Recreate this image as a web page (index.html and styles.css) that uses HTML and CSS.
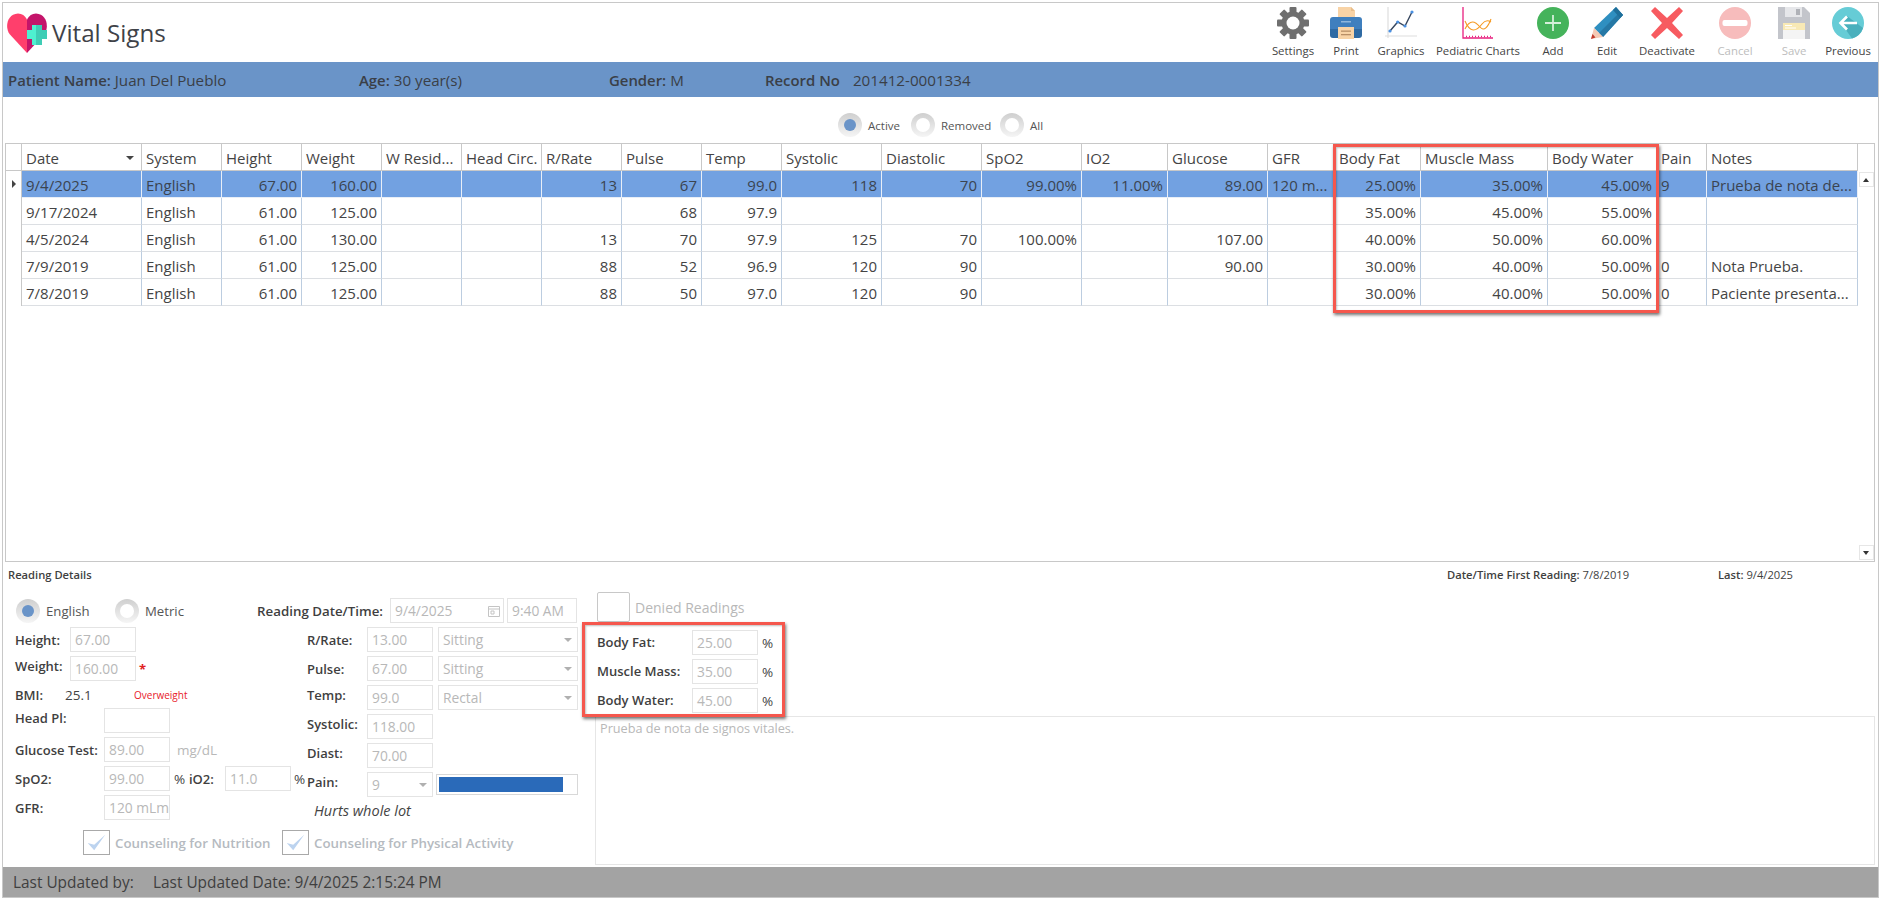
FILE: index.html
```html
<!DOCTYPE html>
<html lang="en">
<head>
<meta charset="utf-8">
<title>Vital Signs</title>
<link rel="stylesheet" href="styles.css">
</head>
<body>
<div class="app">
  <header class="topbar">
    <svg class="logo" viewBox="0 0 40 40" aria-hidden="true">
      <path fill="#ff3f6c" d="M20 40 L2.5 21 C-2 15 -0.5 1 11 0.5 C15 0.5 18 2.5 20 6.5Z"/>
      <path fill="#c4146a" d="M20 40 L37.5 21 C42 15 40.5 1 29 0.5 C25 0.5 22 2.5 20 6.5Z"/>
      <path fill="#4ef0d0" d="M25 12h4v5h0v9h0v6h-4v-6h-5v-9h5z"/>
      <path fill="#3fcdb5" d="M29 12h6v5h5v9h-5v6h-6z"/>
    </svg>
    <h1 class="title">Vital Signs</h1>
    <nav class="toolbar">
      <div class="tool"><svg class="icon" viewBox="0 0 32 32"><g fill="#6f6f6f"><rect x="12.5" y="0" width="7" height="32" rx="1"/><rect x="12.5" y="0" width="7" height="32" rx="1" transform="rotate(45 16 16)"/><rect x="12.5" y="0" width="7" height="32" rx="1" transform="rotate(90 16 16)"/><rect x="12.5" y="0" width="7" height="32" rx="1" transform="rotate(135 16 16)"/><circle cx="16" cy="16" r="11.5"/></g><circle cx="16" cy="16" r="6.5" fill="#fff"/></svg><span>Settings</span></div>
      <div class="tool"><svg class="icon" viewBox="0 0 32 32"><path fill="#f8d3a6" d="M8 0h13l4 4v8H8z"/><path fill="#e8bd8a" d="M21 0l4 4h-4z"/><path fill="#3f7fbe" d="M3 10h26a3 3 0 0 1 3 3v9H0v-9a3 3 0 0 1 3-3z"/><path fill="#2f6aa3" d="M0 22h32v6a3 3 0 0 1-3 3H3a3 3 0 0 1-3-3z"/><rect x="11" y="14" width="10" height="1.5" fill="#8fb7dd"/><rect x="8" y="20" width="16" height="12" fill="#f8d3a6"/><rect x="11" y="23.5" width="10" height="1.3" fill="#b98f66"/><rect x="11" y="27" width="10" height="1.3" fill="#b98f66"/></svg><span>Print</span></div>
      <div class="tool"><svg class="icon" viewBox="0 0 32 32"><path d="M3 0v31M0 29h32" stroke="#dedede" stroke-width="1.2" fill="none"/><polyline points="5,24 12.7,15 20,19 27,5" fill="none" stroke="#37475f" stroke-width="1.4"/><g fill="#4a90e2"><circle cx="5" cy="24" r="1.6"/><circle cx="12.7" cy="15" r="1.6"/><circle cx="20" cy="19" r="1.6"/><circle cx="27" cy="5" r="1.6"/></g></svg><span>Graphics</span></div>
      <div class="tool"><svg class="icon" viewBox="0 0 32 32"><path d="M1 0v31h30" stroke="#e8207f" stroke-width="1.3" fill="none"/><path d="M4 29.5h26" stroke="#e8207f" stroke-width="1.6" stroke-dasharray="1 2" fill="none"/><path d="M3 14 C8 26 14 25 20 17 C23 13 26 13 29 15" stroke="#f59a23" stroke-width="1.1" fill="none"/><path d="M3 22 C8 12 13 14 18 20 C22 25 26 20 29 12" stroke="#f59a23" stroke-width="1.1" fill="none"/></svg><span>Pediatric Charts</span></div>
      <div class="tool"><svg class="icon" viewBox="0 0 32 32"><circle cx="16" cy="16" r="16" fill="#45b35b"/><path d="M16 8v16M8 16h16" stroke="#d5efda" stroke-width="1.8"/></svg><span>Add</span></div>
      <div class="tool"><svg class="icon" viewBox="0 0 32 32"><path fill="#2f8fc0" d="M3 21 L25 0 L32 8 L12 30z"/><path fill="#2678a5" d="M8 26 L29 5 L32 8 L12 30z"/><path fill="#1f6f9a" d="M22 3 L25 0 L32 8 L29 11z"/><path fill="#f4c9b4" d="M3 21 L12 30 L0 32z"/><path fill="#c0392b" d="M1.5 27 L4.5 30.6 L0 32z"/></svg><span>Edit</span></div>
      <div class="tool"><svg class="icon" viewBox="0 0 32 32"><path fill="#f75b60" d="M4 0 L16 11 L28 0 L32 4 L21 16 L32 28 L28 32 L16 21 L4 32 L0 28 L11 16 L0 4z"/></svg><span>Deactivate</span></div>
      <div class="tool tool-off"><svg class="icon" viewBox="0 0 32 32"><circle cx="16" cy="16" r="16" fill="#f7bcbc"/><rect x="3.5" y="13" width="25" height="6" rx="2" fill="#fff"/></svg><span>Cancel</span></div>
      <div class="tool tool-off"><svg class="icon" viewBox="0 0 32 32"><path fill="#c3c5cb" d="M0 0h26l6 6v26H0z"/><rect x="7" y="0" width="17" height="10" fill="#e6e7ea"/><rect x="18" y="2" width="4" height="6" fill="#b0b2b8"/><rect x="5" y="16" width="22" height="16" fill="#f4f4f4"/><rect x="5" y="16" width="22" height="7" fill="#f8e9b5"/><rect x="7" y="18" width="7" height="1" fill="#fff"/><rect x="7" y="20.5" width="11" height="1" fill="#fff"/></svg><span>Save</span></div>
      <div class="tool"><svg class="icon" viewBox="0 0 32 32"><circle cx="16" cy="16" r="16" fill="#66ccd6"/><path fill="#4ab0bd" d="M9 16 L15 9 L31 21 A16 16 0 0 1 20 31.5z"/><path d="M25 16H9M15 9.5 L8.5 16 L15 22.5" fill="none" stroke="#fff" stroke-width="2.6"/></svg><span>Previous</span></div>
    </nav>
  </header>

  <section class="patient">
    <span class="pt-item pt-name"><b>Patient Name:</b> Juan Del Pueblo</span>
    <span class="pt-item pt-age"><b>Age:</b> 30 year(s)</span>
    <span class="pt-item pt-gender"><b>Gender:</b> M</span>
    <span class="pt-item"><b class="pt-rec">Record No</b>201412-0001334</span>
  </section>

  <div class="filters">
    <label class="opt opt-small opt-active"><i class="radio on"></i>Active</label>
    <label class="opt opt-small opt-removed"><i class="radio"></i>Removed</label>
    <label class="opt opt-small"><i class="radio"></i>All</label>
  </div>

  <section class="grid">
    <table class="vitals">
      <colgroup><col class="c0"><col class="c-date"><col class="c80"><col class="c80"><col class="c80"><col class="c80"><col class="c80"><col class="c80"><col class="c80"><col class="c80"><col class="c100"><col class="c100"><col class="c100"><col class="c-io2"><col class="c100"><col class="c-gfr"><col class="c-fat"><col class="c-muscle"><col class="c-water"><col class="c-pain"><col class="c-notes"></colgroup>
      <thead>
        <tr><th></th><th class="sorted">Date</th><th>System</th><th>Height</th><th>Weight</th><th>W Resid...</th><th>Head Circ.</th><th>R/Rate</th><th>Pulse</th><th>Temp</th><th>Systolic</th><th>Diastolic</th><th>SpO2</th><th>IO2</th><th>Glucose</th><th>GFR</th><th>Body Fat</th><th>Muscle Mass</th><th>Body Water</th><th>Pain</th><th>Notes</th></tr>
      </thead>
      <tbody>
        <tr class="selected"><td class="ind"><i class="marker"></i></td><td>9/4/2025</td><td>English</td><td class="n">67.00</td><td class="n">160.00</td><td></td><td></td><td class="n">13</td><td class="n">67</td><td class="n">99.0</td><td class="n">118</td><td class="n">70</td><td class="n">99.00%</td><td class="n">11.00%</td><td class="n">89.00</td><td>120 m...</td><td class="n">25.00%</td><td class="n">35.00%</td><td class="n">45.00%</td><td>9</td><td>Prueba de nota de...</td></tr>
        <tr><td class="ind"></td><td>9/17/2024</td><td>English</td><td class="n">61.00</td><td class="n">125.00</td><td></td><td></td><td></td><td class="n">68</td><td class="n">97.9</td><td></td><td></td><td></td><td></td><td></td><td></td><td class="n">35.00%</td><td class="n">45.00%</td><td class="n">55.00%</td><td></td><td></td></tr>
        <tr><td class="ind"></td><td>4/5/2024</td><td>English</td><td class="n">61.00</td><td class="n">130.00</td><td></td><td></td><td class="n">13</td><td class="n">70</td><td class="n">97.9</td><td class="n">125</td><td class="n">70</td><td class="n">100.00%</td><td></td><td class="n">107.00</td><td></td><td class="n">40.00%</td><td class="n">50.00%</td><td class="n">60.00%</td><td></td><td></td></tr>
        <tr><td class="ind"></td><td>7/9/2019</td><td>English</td><td class="n">61.00</td><td class="n">125.00</td><td></td><td></td><td class="n">88</td><td class="n">52</td><td class="n">96.9</td><td class="n">120</td><td class="n">90</td><td></td><td></td><td class="n">90.00</td><td></td><td class="n">30.00%</td><td class="n">40.00%</td><td class="n">50.00%</td><td>0</td><td>Nota Prueba.</td></tr>
        <tr><td class="ind"></td><td>7/8/2019</td><td>English</td><td class="n">61.00</td><td class="n">125.00</td><td></td><td></td><td class="n">88</td><td class="n">50</td><td class="n">97.0</td><td class="n">120</td><td class="n">90</td><td></td><td></td><td></td><td></td><td class="n">30.00%</td><td class="n">40.00%</td><td class="n">50.00%</td><td>0</td><td>Paciente presenta...</td></tr>
      </tbody>
    </table>
    <div class="scroll">
      <span class="scroll-btn"><i class="tri-up"></i></span>
      <span class="scroll-btn"><i class="tri-down"></i></span>
    </div>
  </section>

  <section class="details">
    <div class="details-head">
      <span class="dh-title">Reading Details</span>
      <span class="dh-first"><b>Date/Time First Reading:</b> 7/8/2019</span>
      <span class="dh-last"><b>Last:</b> 9/4/2025</span>
    </div>
    <div class="details-body">
      <div class="form-left">
        <div class="top-row">
          <label class="opt opt-english"><i class="radio on"></i>English</label>
          <label class="opt"><i class="radio"></i>Metric</label>
          <span class="lbl lbl-date">Reading Date/Time:</span>
          <div class="field f-date">9/4/2025<svg class="cal" viewBox="0 0 12 12"><path d="M.5 1.5h11v10H.5zM.5 4h11M3 6h3v3H3z" fill="none" stroke="#c4c4c4"/></svg></div>
          <div class="field f-time">9:40 AM</div>
        </div>
        <div class="cols">
          <div class="col-left">
            <div class="row"><span class="lbl w55">Height:</span><div class="field">67.00</div></div>
            <div class="row"><span class="lbl w55 lift">Weight:</span><div class="field">160.00</div><span class="star">*</span></div>
            <div class="row row-bmi"><span class="lbl w50">BMI:</span><span class="bmi-val">25.1</span><span class="bmi-tag">Overweight</span></div>
            <div class="row"><span class="lbl w89 lift">Head Pl:</span><div class="field"></div></div>
            <div class="row"><span class="lbl w89">Glucose Test:</span><div class="field">89.00</div><span class="unit">mg/dL</span></div>
            <div class="row"><span class="lbl w89">SpO2:</span><div class="field">99.00</div><span class="pct pct-a">%</span><span class="lbl w36">iO2:</span><div class="field">11.0</div><span class="pct pct-b">%</span></div>
            <div class="row"><span class="lbl w89">GFR:</span><div class="field">120 mLm</div></div>
          </div>
          <div class="col-right">
            <div class="row"><span class="lbl w60">R/Rate:</span><div class="field">13.00</div><div class="field select">Sitting</div></div>
            <div class="row"><span class="lbl w60">Pulse:</span><div class="field">67.00</div><div class="field select">Sitting</div></div>
            <div class="row"><span class="lbl w60 lift">Temp:</span><div class="field">99.0</div><div class="field select">Rectal</div></div>
            <div class="row"><span class="lbl w60 lift">Systolic:</span><div class="field">118.00</div></div>
            <div class="row"><span class="lbl w60 lift">Diast:</span><div class="field">70.00</div></div>
            <div class="row"><span class="lbl w60 lift">Pain:</span><div class="field select-small">9</div><div class="painbar"><div class="painfill"></div></div></div>
            <div class="hurts">Hurts whole lot</div>
          </div>
        </div>
        <div class="checks">
          <div class="check check-first"><i class="box"><svg viewBox="0 0 27 25"><path d="M4 13 L11 21 L23 4 L11 15z" fill="#bcd3ef"/></svg></i>Counseling for Nutrition</div>
          <div class="check"><i class="box"><svg viewBox="0 0 27 25"><path d="M4 13 L11 21 L23 4 L11 15z" fill="#bcd3ef"/></svg></i>Counseling for Physical Activity</div>
        </div>
      </div>
      <div class="form-right">
        <div class="denied"><i class="box box-big"></i>Denied Readings</div>
        <div class="row body-row"><span class="lbl w95 lift-sm">Body Fat:</span><div class="field">25.00</div><span class="pct-c">%</span></div>
        <div class="row body-row"><span class="lbl w95 lift-sm">Muscle Mass:</span><div class="field">35.00</div><span class="pct-c">%</span></div>
        <div class="row body-row"><span class="lbl w95 lift-sm">Body Water:</span><div class="field">45.00</div><span class="pct-c">%</span></div>
        <div class="notes">Prueba de nota de signos vitales.</div>
      </div>
    </div>
  </section>

  <footer class="status">
    <span class="st-by">Last Updated by:</span>
    <span>Last Updated Date: 9/4/2025 2:15:24 PM</span>
  </footer>

  <div class="callout callout-grid"></div>
  <div class="callout callout-form"></div>
</div>
</body>
</html>
```
FILE: styles.css
```css
* { box-sizing: border-box; }
html, body { margin: 0; padding: 0; background: #fff; }
body { font-family: "Open Sans", "Noto Sans", sans-serif; color: #444; overflow: hidden; }

.app {
  position: relative;
  margin: 2px 0 0 2px;
  width: 1877px;
  height: 896px;
  border: 1px solid #c8c8c8;
  display: flex;
  flex-direction: column;
}

/* header */
.topbar { height: 59px; flex: none; display: flex; align-items: center; padding-left: 4px; }
.logo { width: 40px; height: 40px; flex: none; }
.title { margin: 2px 0 0 5px; font-size: 24.2px; font-weight: 500; color: #3f4248; line-height: 1; }
.toolbar {
  margin-left: auto;
  align-self: flex-start;
  display: grid;
  grid-template-columns: 54px 52px 58px 96px 54px 54px 66px 70px 48px 60px;
  padding-top: 4px;
}
.tool { display: flex; flex-direction: column; align-items: center; font-size: 11.4px; line-height: 16px; color: #444; white-space: nowrap; }
.tool span { margin-top: 4px; }
.tool-off span { color: #bdbdbd; }
.icon { width: 32px; height: 32px; display: block; }

/* patient strip */
.patient { height: 35px; flex: none; background: #6a94c8; display: flex; align-items: center; padding-left: 5px; font-size: 15.2px; color: #3a3f47; white-space: nowrap; }
.patient b { font-weight: 600; font-size: 14.9px; }
.pt-name { width: 351px; }
.pt-age { width: 250px; }
.pt-gender { width: 156px; }
.pt-rec { margin-right: 13px; }

/* filter radios */
.filters { height: 46px; flex: none; display: flex; align-items: flex-start; padding: 16px 0 0 835px; }
.opt { display: flex; align-items: center; height: 24px; font-size: 13.2px; color: #555; white-space: nowrap; }
.opt-small { font-size: 11.5px; }
.opt-active { width: 73px; }
.opt-removed { width: 89px; }
.opt-english { width: 99px; margin-left: 1px; }
.radio { position: relative; width: 24px; height: 24px; border-radius: 50%; flex: none; margin-right: 6px; background: linear-gradient(#cfcfcf, #f5f5f5); }
.radio::after { content: ""; position: absolute; left: 5px; top: 5px; width: 14px; height: 14px; border-radius: 50%; background: #fff; }
.radio.on::after { left: 6px; top: 6px; width: 12px; height: 12px; background: #6a94c8; }

/* data grid */
.grid { height: 419px; flex: none; margin: 0 3px 0 2px; border: 1px solid #c8c8c8; display: flex; align-items: stretch; }
.vitals { width: 1852px; flex: none; align-self: flex-start; table-layout: fixed; border-collapse: separate; border-spacing: 0; font-size: 15px; color: #444; }
.c0 { width: 16px; }
.c-date { width: 120px; }
.c80 { width: 80px; }
.c100 { width: 100px; }
.c-io2 { width: 86px; }
.c-gfr { width: 67px; }
.c-fat { width: 86px; }
.c-muscle { width: 127px; }
.c-water { width: 109px; }
.c-pain { width: 50px; }
.c-notes { width: 151px; }
.vitals th { height: 27px; padding: 1px 4px 0; font-weight: 400; text-align: left; white-space: nowrap; overflow: hidden; border-right: 1px solid #c8c8c8; border-bottom: 1px solid #c8c8c8; background: #fff; }
.vitals td { height: 27px; padding: 1px 4px 0; white-space: nowrap; overflow: hidden; border-right: 1px solid #bccde0; border-bottom: 1px solid #dcdfe3; }
.vitals td.n { text-align: right; }
.vitals th.sorted { position: relative; }
.vitals th.sorted::after { content: ""; position: absolute; right: 7px; top: 12px; border: 4px solid transparent; border-top: 4px solid #444; border-bottom: 0; }
.vitals td.ind { padding: 0; border-bottom: 0; border-right: 1px solid #c8c8c8; position: relative; }
.marker { position: absolute; left: 6px; top: 9px; border: 4px solid transparent; border-left: 4px solid #444; border-right: 0; }
.selected td { background: #72a1e1; color: #3b4450; border-right-color: #e8eef7; border-bottom-color: #e8eef7; }
.selected td.ind { background: #fff; border-right-color: #c8c8c8; }

.scroll { flex: 1; display: flex; flex-direction: column; justify-content: space-between; align-items: center; padding: 28px 0 1px; }
.scroll-btn { width: 15px; height: 15px; border: 1px solid #e6e6e6; display: flex; align-items: center; justify-content: center; background: #fff; }
.tri-up { border: 3.5px solid transparent; border-bottom: 4px solid #333; border-top: 0; }
.tri-down { border: 3.5px solid transparent; border-top: 4px solid #333; border-bottom: 0; }

/* details */
.details { flex: 1; min-height: 0; display: flex; flex-direction: column; }
.details-head { height: 28px; flex: none; display: flex; align-items: center; padding: 0 0 3px 5px; font-size: 11.2px; color: #3f3f3f; }
.dh-title { font-weight: 600; margin-right: auto; }
.dh-first { width: 271px; }
.dh-last { width: 160px; }
.dh-first b, .dh-last b { font-weight: 600; }
.details-body { flex: 1; display: flex; min-height: 0; }
.form-left { width: 592px; flex: none; padding: 8px 18px 0 12px; }
.form-right { flex: 1; margin-right: 3px; padding-top: 2px; display: flex; flex-direction: column; }

.top-row { display: flex; align-items: center; height: 25px; }
.lbl { font-size: 13px; font-weight: 600; color: #3f3f3f; white-space: nowrap; flex: none; }
.lift { margin-bottom: 5px; }
.lift-sm { margin-bottom: 2px; }
.lbl-date { margin-left: auto; margin-right: 7px; font-size: 13.3px; }
.field { width: 66px; height: 25px; flex: none; border: 1px solid #e4e4e4; padding: 0 4px; font-size: 13.8px; line-height: 23px; color: #b8b8b8; white-space: nowrap; overflow: hidden; position: relative; background: #fff; }
.f-date { width: 114px; }
.f-time { width: 70px; margin-left: 3px; }
.cal { position: absolute; right: 3px; top: 6px; width: 12px; height: 12px; }
.cols { display: flex; margin-top: 4px; }
.col-left { width: 292px; flex: none; display: flex; flex-direction: column; gap: 4px; }
.col-right { flex: 1; display: flex; flex-direction: column; gap: 4px; }
.row { display: flex; align-items: center; height: 25px; flex: none; }
.row-bmi { height: 19px; }
.w36 { width: 36px; }
.w50 { width: 50px; }
.w55 { width: 55px; }
.w60 { width: 60px; }
.w89 { width: 89px; }
.w95 { width: 95px; }
.star { margin-left: 3px; color: #e02020; font-size: 13px; font-weight: 700; }
.bmi-val { width: 69px; font-size: 13.5px; color: #444; }
.bmi-tag { font-size: 10px; color: #e8202a; }
.unit { margin-left: 7px; font-size: 13.5px; color: #b8b8b8; }
.pct { font-size: 13.5px; color: #444; }
.pct-a { width: 15px; margin-left: 4px; }
.pct-b { margin-left: 3px; }
.select { width: 140px; margin-left: 5px; }
.select::after, .select-small::after { content: ""; position: absolute; right: 5px; top: 10px; border: 4px solid transparent; border-top: 4px solid #b0b0b0; border-bottom: 0; }
.select-small { width: 66px; height: 25px; flex: none; border: 1px solid #e4e4e4; padding: 0 4px; font-size: 13.8px; line-height: 23px; color: #b8b8b8; position: relative; }
.painbar { width: 142px; height: 21px; margin-left: 3px; border: 1px solid #d8d8d8; padding: 2px; background: #fff; }
.painfill { width: 124px; height: 100%; background: #2a6ab9; }
.hurts { margin: -1px 0 0 7px; font-size: 14.5px; font-style: italic; color: #444; height: 22px; line-height: 22px; }
.checks { display: flex; margin-top: 8px; padding-left: 68px; }
.check { display: flex; align-items: center; font-size: 13.3px; font-weight: 600; color: #b5bac0; white-space: nowrap; }
.check-first { width: 199px; }
.box { display: block; width: 27px; height: 25px; border: 1px solid #a9a9a9; margin-right: 5px; flex: none; background: #fff; }
.box svg { display: block; width: 100%; height: 100%; }
.box-big { width: 33px; height: 30px; border-color: #c8c8c8; border-radius: 2px; }
.denied { display: flex; align-items: center; height: 30px; padding-left: 2px; font-size: 14px; color: #b8b8b8; flex: none; margin-bottom: 8px; }
.body-row { padding-left: 2px; margin-bottom: 4px; }
.pct-c { margin-left: 4px; font-size: 13.5px; color: #444; }
.notes { flex: 1; margin-top: -1px; border: 1px solid #e6e6e6; padding: 2px 4px; font-size: 12.7px; color: #b8b8b8; margin-bottom: 2px; }

/* footer */
.status { height: 30px; flex: none; background: #a3a3a3; display: flex; align-items: center; padding-left: 10px; font-size: 15.4px; color: #3f3f3f; }
.st-by { width: 140px; }

/* annotation callouts */
.callout { position: absolute; border: 3px solid #f5574d; box-shadow: 1px 2px 3px rgba(0,0,0,.55), inset 1px 1px 2px rgba(0,0,0,.25); pointer-events: none; }
.callout-grid { left: 1330px; top: 141px; width: 326px; height: 169px; }
.callout-form { left: 579px; top: 619px; width: 203px; height: 95px; }
```
